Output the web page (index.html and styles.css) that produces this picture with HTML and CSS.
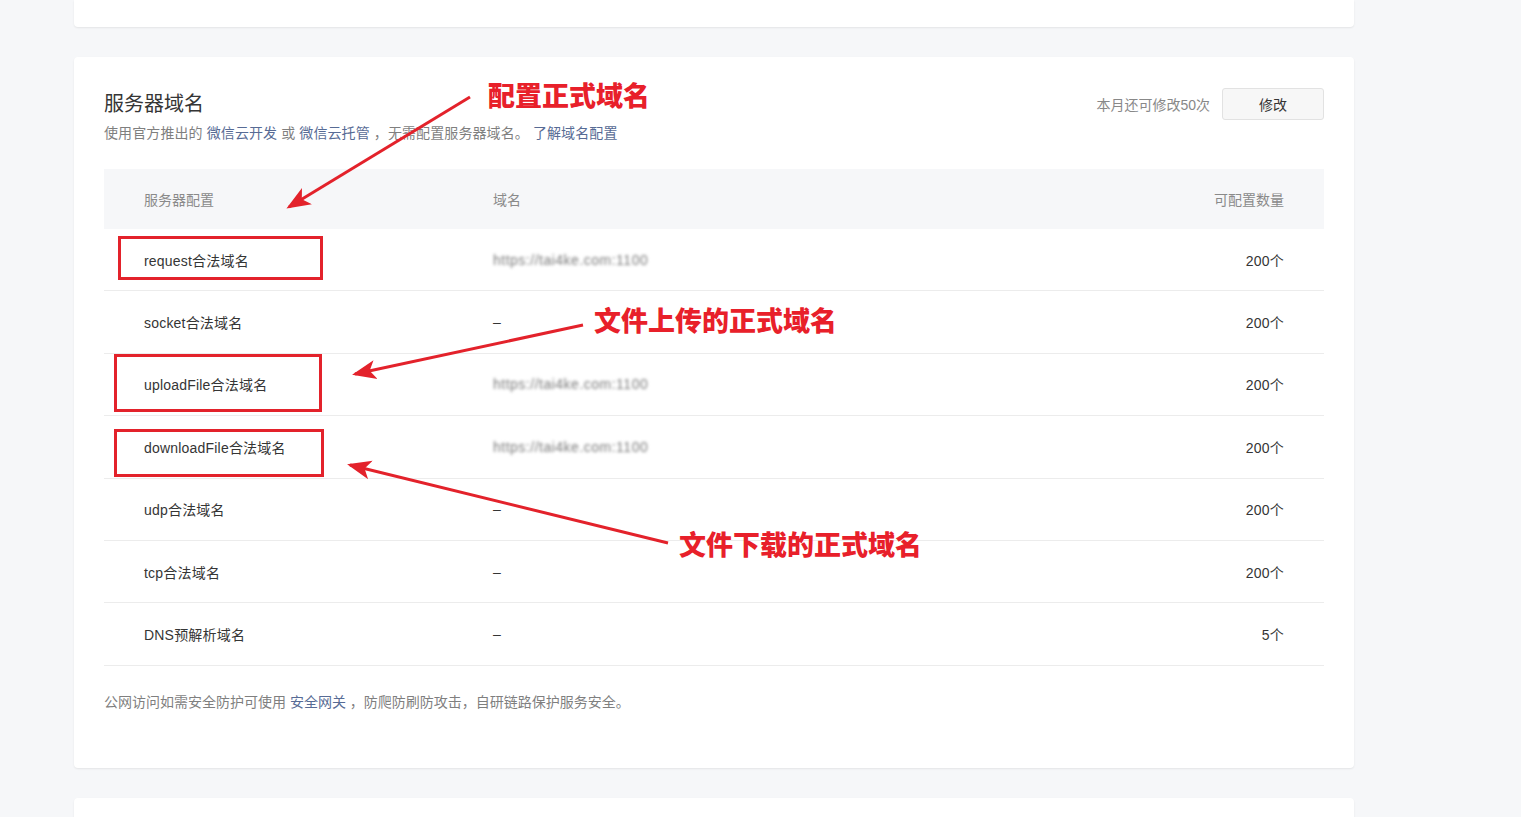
FILE: index.html
```html
<!DOCTYPE html>
<html lang="zh-CN">
<head>
  <meta charset="UTF-8">
  <meta name="viewport" content="width=device-width, initial-scale=1.0">
  <title>服务器域名</title>
  <link rel="stylesheet" href="styles.css">
</head>
<body>
  <div class="page">
    <div class="card card-top"></div>

    <!-- 服务器域名 -->
    <div class="card domain-card">
      <div class="card-head">
        <div>
          <h2 class="card-title">服务器域名</h2>
          <p class="card-desc">使用官方推出的 <a href="#">微信云开发</a> 或 <a href="#">微信云托管</a> ，无需配置服务器域名。 <a href="#">了解域名配置</a></p>
        </div>
        <div class="card-extra">
          <span class="quota">本月还可修改50次</span>
          <button class="btn">修改</button>
        </div>
      </div>

      <div class="domain-table">
        <div class="row row-head">
          <div>服务器配置</div>
          <div>域名</div>
          <div class="num">可配置数量</div>
        </div>
        <div class="row">
          <div>request合法域名</div>
          <div class="blur">https://tai4ke.com:1100</div>
          <div class="num">200个</div>
        </div>
        <div class="row">
          <div>socket合法域名</div>
          <div>–</div>
          <div class="num">200个</div>
        </div>
        <div class="row">
          <div>uploadFile合法域名</div>
          <div class="blur">https://tai4ke.com:1100</div>
          <div class="num">200个</div>
        </div>
        <div class="row">
          <div>downloadFile合法域名</div>
          <div class="blur">https://tai4ke.com:1100</div>
          <div class="num">200个</div>
        </div>
        <div class="row">
          <div>udp合法域名</div>
          <div>–</div>
          <div class="num">200个</div>
        </div>
        <div class="row">
          <div>tcp合法域名</div>
          <div>–</div>
          <div class="num">200个</div>
        </div>
        <div class="row">
          <div>DNS预解析域名</div>
          <div>–</div>
          <div class="num">5个</div>
        </div>
      </div>

      <p class="card-foot">公网访问如需安全防护可使用 <a href="#">安全网关</a> ，防爬防刷防攻击，自研链路保护服务安全。</p>

      <!-- annotations drawn on top of the screenshot -->
      <svg class="marks" width="1280" height="711" viewBox="0 0 1280 711">
        <defs>
          <marker id="head" markerWidth="8" markerHeight="8" refX="7" refY="4" orient="auto" markerUnits="strokeWidth">
            <path d="M0,0.8 L8,4 L0,7.2 L2,4 Z" fill="#e3222b"/>
          </marker>
        </defs>
        <rect x="45.5" y="180.5" width="202" height="41" fill="none" stroke="#e3222b" stroke-width="3"/>
        <rect x="41.5" y="298.5" width="205" height="55" fill="none" stroke="#e3222b" stroke-width="3"/>
        <rect x="41.5" y="373.5" width="207" height="45" fill="none" stroke="#e3222b" stroke-width="3"/>
        <line x1="396" y1="40" x2="215" y2="150" stroke="#e3222b" stroke-width="3" marker-end="url(#head)"/>
        <line x1="509" y1="268" x2="281" y2="317" stroke="#e3222b" stroke-width="3" marker-end="url(#head)"/>
        <line x1="594" y1="486" x2="276" y2="408" stroke="#e3222b" stroke-width="3" marker-end="url(#head)"/>
      </svg>
      <span class="mark-text mark-1">配置正式域名</span>
      <span class="mark-text mark-2">文件上传的正式域名</span>
      <span class="mark-text mark-3">文件下载的正式域名</span>
    </div>

    <div class="card card-bottom"></div>
  </div>
</body>
</html>
```

FILE: styles.css
```css
body {
  margin: 0;
  background-color: #f6f7f9;
  font-family: "Liberation Sans", "Noto Sans CJK SC", sans-serif;
  font-size: 14px;
  color: #353535;
  overflow: hidden;
}
a {
  color: #576b95;
  text-decoration: none;
}
.page {
  width: 1280px;
  margin-left: 74px;
  display: flex;
  flex-direction: column;
  gap: 30px;
}
.card {
  background-color: #fff;
  border-radius: 4px;
  box-shadow: 0 1px 2px rgba(0, 0, 0, 0.08);
}
.card-top {
  height: 27px;
  border-radius: 0 0 4px 4px;
}
.card-bottom {
  height: 60px;
}
.domain-card {
  position: relative;
  padding: 32px 30px 55px;
}
.card-head {
  display: flex;
  justify-content: space-between;
  align-items: flex-start;
}
.card-title {
  margin: 0;
  font-size: 20px;
  font-weight: normal;
  line-height: 28px;
  color: #353535;
  font-family: "Noto Sans CJK SC", sans-serif;
}
.card-desc {
  margin: 5px 0 0;
  line-height: 22px;
  color: #7f7f7f;
  letter-spacing: 0.1px;
}
.card-extra {
  display: flex;
  align-items: center;
  gap: 12px;
  margin-top: -1px;
}
.quota {
  color: #888;
}
.btn {
  width: 102px;
  height: 32px;
  background-color: #f7f7f7;
  border: 1px solid #e2e2e2;
  border-radius: 3px;
  font-family: inherit;
  font-size: 14px;
  color: #353535;
  cursor: pointer;
}
.domain-table {
  margin-top: 25px;
}
.row {
  display: grid;
  grid-template-columns: 349px 1fr auto;
  align-items: center;
  padding: 0 40px;
  height: 62.4px;
  box-sizing: border-box;
  border-bottom: 1px solid #ececec;
  letter-spacing: 0.2px;
}
.row-head {
  height: 60px;
  background-color: #f6f7f9;
  border-bottom: none;
  color: #8a8a8a;
  letter-spacing: 0;
}
.num {
  text-align: right;
}
.blur {
  color: #7a7a7a;
  letter-spacing: 0.5px;
  filter: blur(1.4px);
}
.card-foot {
  margin: 25px 0 0;
  line-height: 22px;
  color: #7f7f7f;
}
.marks {
  position: absolute;
  left: 0;
  top: 0;
  pointer-events: none;
}
.mark-text {
  position: absolute;
  font-family: "Noto Sans CJK SC", sans-serif;
  font-weight: 900;
  font-size: 27px;
  line-height: 32px;
  color: #e8202a;
  white-space: nowrap;
}
.mark-1 {
  left: 414px;
  top: 22px;
}
.mark-2 {
  left: 520px;
  top: 247px;
}
.mark-3 {
  left: 605px;
  top: 471px;
}
```
